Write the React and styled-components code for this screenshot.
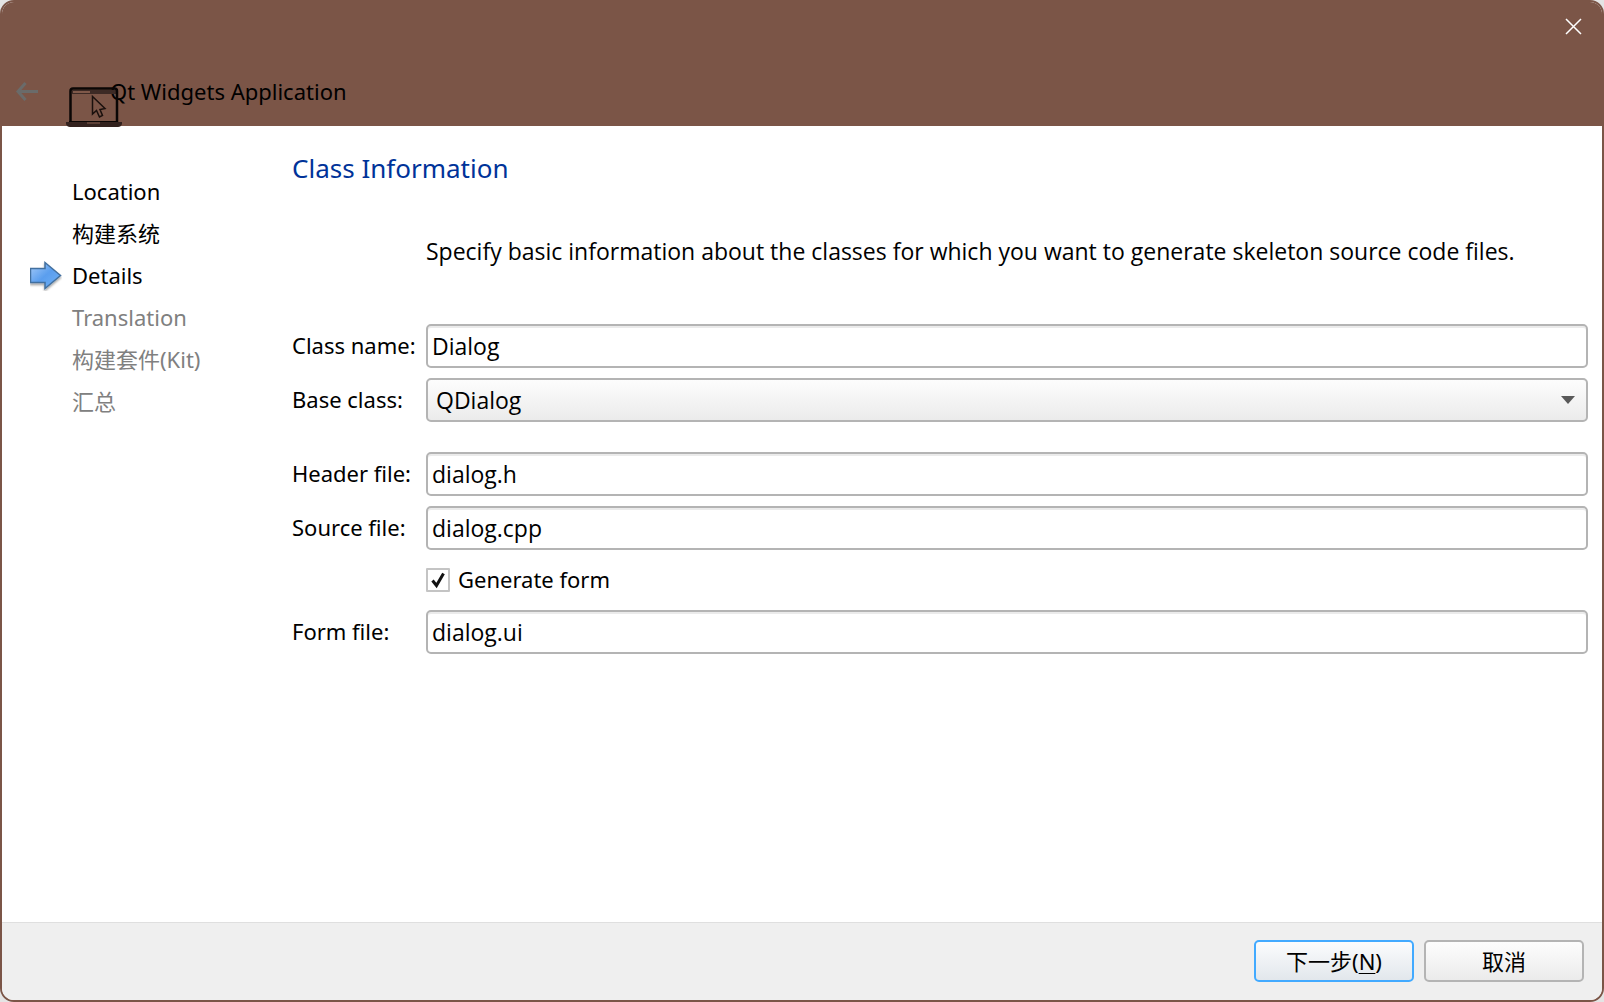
import React, { useState } from "react";
import styled, { createGlobalStyle } from "styled-components";

const GlobalStyle = createGlobalStyle`
  *, *::before, *::after { box-sizing: border-box; }
  body {
    margin: 0;
    background: #e4e4e4;
    color: #000;
    font-family: "Noto Sans", "Noto Sans CJK SC", sans-serif;
    font-size: 22px;
    line-height: 32px;
  }
  button, input, select { font: inherit; color: inherit; }
`;

const Dialog = styled.div`
  display: flex;
  flex-direction: column;
  min-height: 100vh;
  border: 2px solid #7b5547;
  border-radius: 14px;
  background: #fff;
  overflow: hidden;
`;

const TitleBar = styled.header`
  display: flex;
  flex-direction: column;
  height: 124px;
  background: #7b5547;
`;

const CaptionRow = styled.div`
  display: flex;
  justify-content: flex-end;
  height: 72px;
`;

const IconButton = styled.button`
  display: grid;
  place-items: center;
  width: ${(p) => p.$width}px;
  height: ${(p) => p.$height}px;
  padding: 0;
  border: 0;
  background: none;
`;

const HeadingRow = styled.div`
  display: flex;
  align-items: flex-start;
  gap: 16px;
`;

const AppTitle = styled.div`
  position: relative;
  padding: 1px 0 0 42px;
`;

const AppIcon = styled.svg`
  position: absolute;
  left: -3px;
  top: 12px;
`;

const Body = styled.div`
  display: flex;
  flex: 1;
`;

const Steps = styled.ol`
  width: 290px;
  margin: 0;
  padding: 44px 0 0 28px;
  list-style: none;
`;

const Step = styled.li`
  display: flex;
  align-items: center;
  gap: 10px;
  height: 42px;
  color: ${(p) => (p.$pending ? "#808080" : "#000")};
`;

const Marker = styled.span`
  display: flex;
  flex: none;
  width: 32px;
`;

const Page = styled.main`
  flex: 1;
  padding: 24px 14px 24px 0;
`;

const PageTitle = styled.h1`
  margin: 0 0 49px;
  font-size: 26px;
  font-weight: 400;
  line-height: 36px;
  color: #003399;
`;

const Intro = styled.p`
  margin: 0 0 57px 134px;
  font-family: "Open Sans", sans-serif;
  font-size: 23px;
`;

const Form = styled.form`
  display: grid;
  grid-template-columns: 122px 1fr;
  column-gap: 12px;
  row-gap: 10px;
  align-items: center;
`;

const Label = styled.label`
  padding-bottom: 2px;
  white-space: nowrap;
`;

const Field = styled.input`
  width: 100%;
  height: 44px;
  padding: 0 4px;
  border: 2px solid #b4b4b4;
  border-radius: 5px;
  background: #fff;
  box-shadow: inset 0 2px 0 #ebebeb;
  font-family: "Open Sans", sans-serif;
  font-size: 23px;
  outline: none;
`;

const SelectWrap = styled.div`
  position: relative;
`;

const Select = styled.select`
  display: block;
  appearance: none;
  width: 100%;
  height: 44px;
  padding: 0 40px 0 8px;
  border: 2px solid #b4b4b4;
  border-radius: 5px;
  background: linear-gradient(#fdfdfd, #ebebeb);
  font-family: "Open Sans", sans-serif;
  font-size: 23px;
  outline: none;
`;

const SelectArrow = styled.svg`
  position: absolute;
  right: 13px;
  top: 18px;
  pointer-events: none;
`;

const Gap = styled.div`
  grid-column: 1 / -1;
  height: 10px;
`;

const CheckRow = styled.div`
  grid-column: 2;
  display: flex;
  align-items: center;
  gap: 8px;
  height: 40px;
`;

const CheckBoxWrap = styled.span`
  display: grid;
  width: 24px;
  height: 24px;

  & > * { grid-area: 1 / 1; }
`;

const CheckBox = styled.input`
  appearance: none;
  width: 24px;
  height: 24px;
  margin: 0;
  border: 2px solid #c4c4c4;
  border-radius: 1px;
  background: #fff;
`;

const CheckMark = styled.svg`
  pointer-events: none;
`;

const Footer = styled.footer`
  display: flex;
  justify-content: flex-end;
  gap: 10px;
  padding: 17px 18px 18px;
  border-top: 1px solid #dfdfdf;
  background: #efefef;
`;

const PushButton = styled.button`
  width: 160px;
  height: 42px;
  padding: 0;
  border: 2px solid ${(p) => (p.$primary ? "#42aaff" : "#b4b4b4")};
  border-radius: 5px;
  background: ${(p) =>
    p.$primary
      ? "linear-gradient(#fbfcfd, #e2e7ec)"
      : "linear-gradient(#fdfdfd, #ebebeb)"};
`;

const Mnemonic = styled.span`
  text-decoration: underline;
  text-decoration-thickness: 1px;
  text-underline-offset: 3px;
`;

const STEPS = [
  { name: "Location" },
  { name: "构建系统" },
  { name: "Details", current: true },
  { name: "Translation", pending: true },
  { name: "构建套件(Kit)", pending: true },
  { name: "汇总", pending: true },
];

function CurrentArrow() {
  return (
    <svg width="32" height="32" viewBox="0 0 32 32" aria-hidden="true">
      <defs>
        <linearGradient id="arrowFill" x1="0" y1="0" x2="1" y2="1">
          <stop offset="0" stopColor="#a9cdf8" />
          <stop offset="0.5" stopColor="#5a9eee" />
          <stop offset="1" stopColor="#72b2f6" />
        </linearGradient>
        <filter id="arrowShadow" x="-20%" y="-20%" width="140%" height="150%">
          <feDropShadow dx="0" dy="2" stdDeviation="1" floodOpacity="0.35" />
        </filter>
      </defs>
      <path
        d="M0.500 9.500H15V3.500L30.500 16.500L15 29.500V23.500H0.500Z"
        fill="url(#arrowFill)"
        stroke="#43709f"
        strokeWidth="1.500"
        filter="url(#arrowShadow)"
      />
    </svg>
  );
}

export default function App() {
  const [className, setClassName] = useState("Dialog");
  const [header, setHeader] = useState("dialog.h");
  const [source, setSource] = useState("dialog.cpp");
  const [formFile, setFormFile] = useState("dialog.ui");
  const [generate, setGenerate] = useState(true);

  return (
    <>
      <GlobalStyle />
      <Dialog role="dialog" aria-label="Qt Widgets Application">
        <TitleBar>
          <CaptionRow>
            <IconButton $width={58} $height={48} aria-label="Close">
              <svg width="17" height="17" viewBox="0 0 17 17">
                <path d="M1 1L16 16M16 1L1 16" stroke="#fff" strokeWidth="1.500" />
              </svg>
            </IconButton>
          </CaptionRow>
          <HeadingRow>
            <IconButton $width={50} $height={38} aria-label="Back" disabled>
              <svg width="24" height="36" viewBox="0 0 24 36" fill="none">
                <path
                  d="M10.500 8L3 16.500L10.500 25M3 16.500H23"
                  stroke="#6a6b6a"
                  strokeWidth="3"
                />
              </svg>
            </IconButton>
            <AppTitle>
              <AppIcon width="58" height="42" viewBox="0 0 58 42" aria-hidden="true">
                <path d="M7 4H51V8H7Z" fill="#3d2a25" />
                <path d="M8 5H25V7H8Z" fill="#80594a" />
                <path
                  d="M5.500 36V5Q5.500 2.500 8 2.500H49.500Q52 2.500 52 5V36"
                  fill="none"
                  stroke="#0a0605"
                  strokeWidth="2.500"
                />
                <path d="M1 36H57V38Q56 41 53 41H5Q2 41 1 38Z" fill="#33221e" />
                <path d="M22 36H35V38H22Z" fill="#5c4036" />
                <path d="M4 35.500H53" stroke="#0a0605" />
                <path
                  d="M27.500 10.500V28L31.500 24.500L34.500 31L37.500 29.500L35 23.500L40 22.500Z"
                  fill="none"
                  stroke="#1a100d"
                  strokeWidth="1.500"
                />
              </AppIcon>
              Qt Widgets Application
            </AppTitle>
          </HeadingRow>
        </TitleBar>

        <Body>
          <Steps>
            {STEPS.map((s) => (
              <Step key={s.name} $pending={s.pending} aria-current={s.current ? "step" : undefined}>
                <Marker>{s.current && <CurrentArrow />}</Marker>
                {s.name}
              </Step>
            ))}
          </Steps>

          <Page>
            <PageTitle>Class Information</PageTitle>
            <Intro>
              Specify basic information about the classes for which you want to generate skeleton
              source code files.
            </Intro>
            <Form onSubmit={(e) => e.preventDefault()}>
              <Label htmlFor="class-name">Class name:</Label>
              <Field id="class-name" value={className} onChange={(e) => setClassName(e.target.value)} />
              <Label htmlFor="base-class">Base class:</Label>
              <SelectWrap>
                <Select id="base-class" defaultValue="QDialog">
                  <option>QDialog</option>
                  <option>QMainWindow</option>
                  <option>QWidget</option>
                </Select>
                <SelectArrow width="14" height="8" viewBox="0 0 14 8" aria-hidden="true">
                  <path d="M0 0H14L7 8Z" fill="#595959" />
                </SelectArrow>
              </SelectWrap>
              <Gap />
              <Label htmlFor="header-file">Header file:</Label>
              <Field id="header-file" value={header} onChange={(e) => setHeader(e.target.value)} />
              <Label htmlFor="source-file">Source file:</Label>
              <Field id="source-file" value={source} onChange={(e) => setSource(e.target.value)} />
              <CheckRow>
                <CheckBoxWrap>
                  <CheckBox
                    type="checkbox"
                    id="generate-form"
                    checked={generate}
                    onChange={(e) => setGenerate(e.target.checked)}
                  />
                  {generate && (
                    <CheckMark width="24" height="24" viewBox="0 0 24 24" aria-hidden="true">
                      <path
                        d="M6.500 12.500L10.500 17.500L17.500 5.500"
                        fill="none"
                        stroke="#111"
                        strokeWidth="3"
                      />
                    </CheckMark>
                  )}
                </CheckBoxWrap>
                <Label htmlFor="generate-form">Generate form</Label>
              </CheckRow>
              <Label htmlFor="form-file">Form file:</Label>
              <Field id="form-file" value={formFile} onChange={(e) => setFormFile(e.target.value)} />
            </Form>
          </Page>
        </Body>

        <Footer>
          <PushButton $primary>
            下一步(<Mnemonic>N</Mnemonic>)
          </PushButton>
          <PushButton>取消</PushButton>
        </Footer>
      </Dialog>
    </>
  );
}
